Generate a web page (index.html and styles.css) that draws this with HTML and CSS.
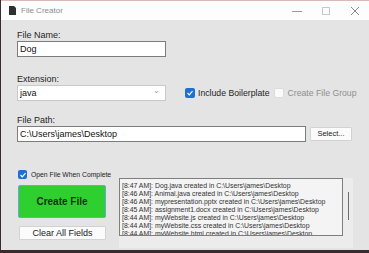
FILE: index.html
```html
<!DOCTYPE html>
<html lang="en">
<head>
<meta charset="UTF-8">
<title>File Creator</title>
<link rel="stylesheet" href="styles.css">
</head>
<body>

  <div class="window">
    <div class="titlebar">
      <svg class="app-icon" width="7" height="9" viewBox="0 0 7 9"><path d="M0 0H5L7 2V9H0Z" fill="#2f2f2f"/></svg>
      <span class="title">File Creator</span>
      <span class="spacer"></span>
      <svg class="ctl" width="10" height="10" viewBox="0 0 10 10"><path d="M0 5.5H10" stroke="#9a9a9a" stroke-width="1"/></svg>
      <svg class="ctl" width="10" height="10" viewBox="0 0 10 10"><rect x="1.5" y="1.5" width="7" height="7" fill="none" stroke="#c8c8c8" stroke-width="1"/></svg>
      <svg class="ctl" width="10" height="10" viewBox="0 0 10 10"><path d="M1 1L9 9M9 1L1 9" stroke="#8a8a8a" stroke-width="1"/></svg>
    </div>

    <div class="content">
      <div class="field">
        <label class="lbl">File Name:</label>
        <div class="textbox short">Dog</div>
      </div>

      <div class="row ext-row">
        <div class="field">
          <label class="lbl">Extension:</label>
          <div class="textbox short combo">java<span class="chev">&#8964;</span></div>
        </div>
        <div class="checks">
          <span class="check on"><svg width="8" height="8" viewBox="0 0 8 8"><path d="M1.5 4L3.3 5.8L6.5 2.2" fill="none" stroke="#fff" stroke-width="1.2"/></svg></span>
          <span class="check-text">Include Boilerplate</span>
          <span class="check off"></span>
          <span class="check-text dim">Create File Group</span>
        </div>
      </div>

      <div class="field path-field">
        <label class="lbl">File Path:</label>
        <div class="row">
          <div class="textbox long">C:\Users\james\Desktop</div>
          <div class="btn select-btn">Select...</div>
        </div>
      </div>

      <div class="row bottom">
        <div class="left-col">
          <div class="open-row">
            <span class="check on small"><svg width="8" height="8" viewBox="0 0 8 8"><path d="M1.5 4L3.3 5.8L6.5 2.2" fill="none" stroke="#fff" stroke-width="1.2"/></svg></span>
            <span class="open-text">Open File When Complete</span>
          </div>
          <div class="create-btn">Create File</div>
          <div class="btn clear-btn">Clear All Fields</div>
        </div>
        <div class="log-panel">
          <div class="log">
            <div>[8:47 AM]: Dog.java created in C:\Users\james\Desktop</div>
            <div>[8:46 AM]: Animal.java created in C:\Users\james\Desktop</div>
            <div>[8:46 AM]: mypresentation.pptx created in C:\Users\james\Desktop</div>
            <div>[8:45 AM]: assignment1.docx created in C:\Users\james\Desktop</div>
            <div>[8:44 AM]: myWebsite.js created in C:\Users\james\Desktop</div>
            <div>[8:44 AM]: myWebsite.css created in C:\Users\james\Desktop</div>
            <div>[8:44 AM]: myWebsite.html created in C:\Users\james\Desktop</div>
          </div>
          <div class="scroll"><span class="thumb"></span></div>
        </div>
      </div>
    </div>
  </div>

</body>
</html>
```

FILE: styles.css
```css
html, body{
  margin:0;
  padding:0;
  background:#3a2c2e;
  font-family:"Liberation Sans", Arial, sans-serif;
  color:#1e1e1e;
}
div.window{
  margin:0 0 0 1px;
  width:368px;
  height:250px;
  background:#e4e4e4;
  display:flex;
  flex-direction:column;
  overflow:hidden;
}
div.titlebar{
  height:20px;
  background:#fdfdfd;
  display:flex;
  align-items:center;
  padding-left:8px;
  border-top:1px solid #d9b9b9;
  box-sizing:border-box;
}
svg.app-icon{ margin-right:5px; }
span.title{
  font-size:8px;
  color:#8c8c8c;
}
span.spacer{ flex:1; }
svg.ctl{ margin-right:19px; }
svg.ctl:last-child{ margin-right:9px; }

div.content{
  padding:10px 0 0 16px;
}
div.row{
  display:flex;
}
label.lbl{
  display:block;
  font-size:9px;
  line-height:11px;
  height:11px;
  color:#1e1e1e;
}
div.textbox{
  box-sizing:border-box;
  height:16px;
  background:#fff;
  border:1px solid #7c7c7c;
  font-size:9px;
  line-height:14px;
  padding-left:2px;
  color:#111;
}
div.short{ width:149px; }
div.long{ width:289px; }
div.combo{
  border-color:#c9c9c9;
  display:flex;
  justify-content:space-between;
}
span.chev{
  color:#9a9a9a;
  font-size:8px;
  line-height:10px;
  padding-right:5px;
}
div.ext-row{
  margin-top:17px;
  align-items:flex-end;
}
div.checks{
  height:16px;
  display:flex;
  align-items:center;
  margin-left:19px;
  white-space:nowrap;
}
span.check{
  box-sizing:border-box;
  flex:none;
  width:10px;
  height:10px;
  border-radius:2px;
  display:flex;
  align-items:center;
  justify-content:center;
}
span.check.on{ background:#1d6fd0; }
span.check.off{
  background:#fbfbfb;
  border:1px solid #dcdcdc;
  margin-left:5px;
}
span.check.small{
  width:9px;
  height:9px;
}
span.check-text{
  font-size:8.7px;
  margin-left:3px;
}
span.check-text.dim{ color:#8f8f8f; }

div.path-field{ margin-top:14px; }
div.btn{
  box-sizing:border-box;
  background:#fbfbfb;
  border:1px solid #d2d2d2;
  border-radius:1px;
  text-align:center;
  color:#222;
}
div.select-btn{
  width:42px;
  height:14px;
  margin:1px 0 0 4px;
  font-size:7.5px;
  line-height:12px;
}

div.bottom{
  margin-top:28px;
}
div.left-col{
  width:90px;
  flex:none;
}
div.open-row{
  display:flex;
  align-items:center;
  height:9px;
  margin-left:1px;
  white-space:nowrap;
}
span.open-text{
  font-size:6.8px;
  margin-left:4px;
  color:#222;
}
div.create-btn{
  box-sizing:border-box;
  margin:6px 0 0 1px;
  width:88px;
  height:33px;
  background:#2fcf2f;
  border:1px solid #62a8d8;
  border-radius:2px;
  font-weight:bold;
  font-size:10px;
  line-height:31px;
  text-align:center;
  color:#173317;
}
div.clear-btn{
  margin:8px 0 0 2px;
  width:87px;
  height:14px;
  font-size:9px;
  line-height:12px;
}
div.log-panel{
  margin:8px 0 0 12px;
  display:flex;
  background:#ececec;
  height:70px;
}
div.log{
  box-sizing:border-box;
  width:224px;
  height:58px;
  border:1px solid #7e7e7e;
  background:#f4f4f4;
  padding:3px 0 0 2px;
  font-size:6.9px;
  line-height:8px;
  color:#333;
  overflow:hidden;
  white-space:nowrap;
}
div.scroll{
  width:10px;
  display:flex;
  justify-content:center;
}
span.thumb{
  margin-top:14px;
  width:1px;
  height:28px;
  background:#6e6e6e;
}
```
